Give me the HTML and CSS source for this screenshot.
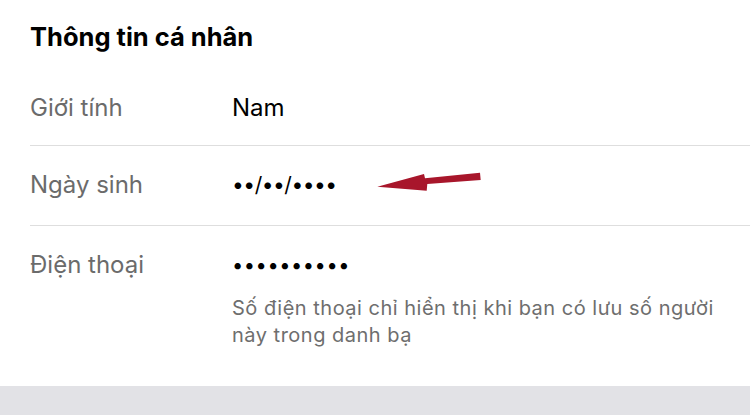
FILE: index.html
```html
<!DOCTYPE html>
<html lang="vi">
<head>
<meta charset="UTF-8">
<meta name="viewport" content="width=device-width, initial-scale=1.0">
<title>Thông tin cá nhân</title>
<link rel="stylesheet" href="styles.css">
</head>
<body>

<div class="section">
    <h2 class="title">Thông tin cá nhân</h2>

    <div class="row">
        <div class="label">Giới tính</div>
        <div class="value">Nam</div>
    </div>

    <div class="row">
        <div class="label">Ngày sinh</div>
        <div class="value date">••/••/••••</div>
    </div>

    <div class="row">
        <div class="label">Điện thoại</div>
        <div class="value">
            <div class="phone">••••••••••</div>
            <p class="note">Số điện thoại chỉ hiển thị khi bạn có lưu số người này trong danh bạ</p>
        </div>
    </div>

    <!-- red arrow pointing at the hidden birthday -->
    <svg class="arrow" width="120" height="35" viewBox="0 0 120 35">
        <polygon points="7.3,21.7 54,9 55,13.3 110,7.7 110.7,15 57.3,19 56.7,25.7" fill="#a8162b"/>
    </svg>
</div>

<div class="footer"></div>

</body>
</html>
```

FILE: styles.css
```css
body {
    font-family: Inter, "Noto Sans", sans-serif;
    background-color: #ffffff;
    color: #000000;
    margin: 0;
}

.section {
    position: relative;
    padding: 22px 0 37px 30px;
}

.title {
    font-size: 25.5px;
    line-height: 30px;
    font-weight: 700;
    margin: 0 0 14px 0;
}

.row {
    display: flex;
    padding: 25px 0 26px 0;
    border-bottom: 1px solid #dedede;
    font-size: 24px;
    line-height: 28px;
}

.row:first-of-type {
    padding: 28px 0 23px 0;
}

.row:last-of-type {
    border-bottom: none;
    padding-bottom: 0;
}

.label {
    width: 202px;
    color: #6b6b6b;
}

.value {
    flex: 1;
}

.date {
    font-size: 21px;
    letter-spacing: -0.5px;
}

.phone {
    font-size: 20px;
    letter-spacing: 0.55px;
}

.note {
    max-width: 495px;
    margin: 16px 0 0 0;
    font-size: 20px;
    line-height: 27px;
    letter-spacing: 0.5px;
    color: #6e6e6e;
}

.arrow {
    position: absolute;
    left: 370px;
    top: 165px;
}

.footer {
    height: 40px;
    background-color: #e2e2e6;
}
```
